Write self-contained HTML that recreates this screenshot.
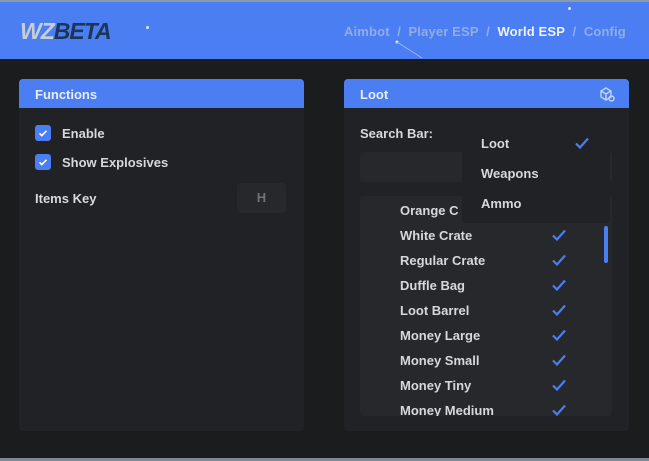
<!DOCTYPE html><html><head><style>
*{margin:0;padding:0;box-sizing:border-box}
body{width:649px;height:461px;background:#1b1c1e;font-family:"Liberation Sans",sans-serif;font-weight:bold;position:relative;overflow:hidden;color:#d8d8dc;font-size:13px}
.a{position:absolute}
.hdr{left:0;top:0;width:649px;height:59px;background:#4a7ef2;border-top:2px solid #8a9bb0}
.panel{background:#212225;border-radius:4px;top:79px;height:352px;width:285px}
.ph{position:absolute;left:0;top:0;right:0;height:29px;background:#4a7ef2;border-radius:4px 4px 0 0;color:#e8ecf5;padding:8px 16px;font-size:13px}
.cb{width:16px;height:16px;background:#4a7ef2;border-radius:3px}
.chk{width:14px;height:12px}
.it{left:400px;font-size:13px}
</style></head><body>
<svg width="0" height="0" style="position:absolute"><defs><symbol id="c" viewBox="0 0 14 12"><path d="M1 6.5l4 4L13 1.5" fill="none" stroke="#4a7ef2" stroke-width="2.2"/></symbol></defs></svg>
<div class="a hdr"></div>
<div class="a" style="left:20px;top:18px;font-size:23px;font-style:italic;letter-spacing:-1px"><span style="color:#c9cdd6">WZ</span><span style="color:#1d3556">BETA</span></div>
<div class="a" style="left:146px;top:26px;width:3px;height:3px;background:#dfe6f5;border-radius:50%"></div>
<div class="a" style="left:568px;top:7px;width:3px;height:3px;background:#dfe6f5;border-radius:50%"></div>
<svg class="a" style="left:395px;top:40px" width="40" height="20"><circle cx="2" cy="2" r="1.5" fill="#dfe6f5"/><line x1="2" y1="2" x2="27" y2="18" stroke="#9fb9f0" stroke-width="1"/></svg>
<div class="a" style="left:344px;top:24px;font-size:13px;color:#93ade3;white-space:nowrap;letter-spacing:0.15px">Aimbot&nbsp; /&nbsp; Player ESP&nbsp; /&nbsp; <span style="color:#eef2fb">World ESP</span>&nbsp; /&nbsp; Config</div>
<div class="a" style="left:0;top:458px;width:649px;height:3px;background:#7a8a99"></div>

<div class="a panel" style="left:19px"><div class="ph">Functions</div></div>
<div class="a cb" style="left:35px;top:125px"><svg width="16" height="16"><path d="M4.5 8.3l2.3 2.3L11.5 5.8" fill="none" stroke="#fff" stroke-width="1.6"/></svg></div>
<div class="a" style="left:62px;top:126px">Enable</div>
<div class="a cb" style="left:35px;top:154px"><svg width="16" height="16"><path d="M4.5 8.3l2.3 2.3L11.5 5.8" fill="none" stroke="#fff" stroke-width="1.6"/></svg></div>
<div class="a" style="left:62px;top:155px">Show Explosives</div>
<div class="a" style="left:35px;top:191px">Items Key</div>
<div class="a" style="left:237px;top:183px;width:49px;height:30px;background:#27282b;border-radius:4px;color:#707276;text-align:center;line-height:30px">H</div>

<div class="a panel" style="left:344px"><div class="ph">Loot</div></div>
<svg class="a" style="left:599px;top:86px" width="17" height="17" fill="none" stroke="#c5d3f3" stroke-width="1.4"><path d="M2 5l5-3 5 3v6l-5 3-5-3z M2 5l5 3 5-3 M7 8v6"/><circle cx="12.5" cy="12.5" r="2.5"/></svg>
<div class="a" style="left:360px;top:126px">Search Bar:</div>
<div class="a" style="left:360px;top:152px;width:252px;height:30px;background:#27282b;border-radius:3px"></div>
<div class="a" style="left:360px;top:196px;width:252px;height:220px;background:#27282b;border-radius:3px"></div>
<div class="a it" style="top:203px">Orange C</div>
<div class="a it" style="top:228px">White Crate</div><svg class="a chk" style="left:552px;top:229px"><use href="#c"/></svg>
<div class="a it" style="top:253px">Regular Crate</div><svg class="a chk" style="left:552px;top:254px"><use href="#c"/></svg>
<div class="a it" style="top:278px">Duffle Bag</div><svg class="a chk" style="left:552px;top:279px"><use href="#c"/></svg>
<div class="a it" style="top:303px">Loot Barrel</div><svg class="a chk" style="left:552px;top:304px"><use href="#c"/></svg>
<div class="a it" style="top:328px">Money Large</div><svg class="a chk" style="left:552px;top:329px"><use href="#c"/></svg>
<div class="a it" style="top:353px">Money Small</div><svg class="a chk" style="left:552px;top:354px"><use href="#c"/></svg>
<div class="a it" style="top:378px">Money Tiny</div><svg class="a chk" style="left:552px;top:379px"><use href="#c"/></svg>
<div class="a it" style="top:403px;height:13px;overflow:hidden">Money Medium</div><svg class="a chk" style="left:552px;top:404px"><use href="#c"/></svg>
<div class="a" style="left:604px;top:226px;width:4px;height:37px;background:#4a7ef2;border-radius:2px"></div>

<div class="a" style="left:462px;top:120px;width:148px;height:103px;background:#212225;border-radius:4px"></div>
<div class="a" style="left:481px;top:136px">Loot</div><svg class="a chk" style="left:575px;top:137px"><use href="#c"/></svg>
<div class="a" style="left:481px;top:166px">Weapons</div>
<div class="a" style="left:481px;top:196px">Ammo</div>
</body></html>
